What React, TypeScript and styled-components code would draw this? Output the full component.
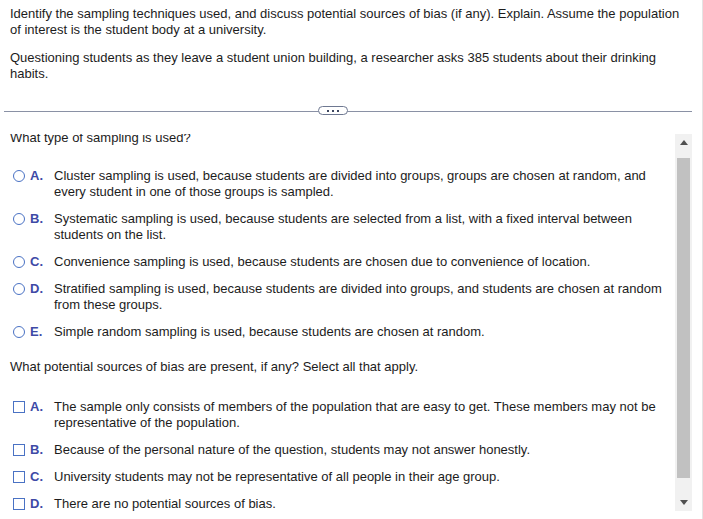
import { styled, createGlobalStyle } from 'styled-components'

const GlobalStyle = createGlobalStyle`
  html, body {
    margin: 0;
    padding: 0;
    background: #ffffff;
  }
  body {
    font-family: 'Liberation Sans', Arial, sans-serif;
    font-size: 13px;
    line-height: 16px;
    color: #1c1c1c;
  }
`

const radioOptions = [
  {
    letter: 'A.',
    text: 'Cluster sampling is used, because students are divided into groups, groups are chosen at random, and every student in one of those groups is sampled.',
  },
  {
    letter: 'B.',
    text: 'Systematic sampling is used, because students are selected from a list, with a fixed interval between students on the list.',
  },
  { letter: 'C.', text: 'Convenience sampling is used, because students are chosen due to convenience of location.' },
  {
    letter: 'D.',
    text: 'Stratified sampling is used, because students are divided into groups, and students are chosen at random from these groups.',
  },
  { letter: 'E.', text: 'Simple random sampling is used, because students are chosen at random.' },
]

const biasOptions = [
  {
    letter: 'A.',
    text: 'The sample only consists of members of the population that are easy to get. These members may not be representative of the population.',
  },
  { letter: 'B.', text: 'Because of the personal nature of the question, students may not answer honestly.' },
  { letter: 'C.', text: 'University students may not be representative of all people in their age group.' },
  { letter: 'D.', text: 'There are no potential sources of bias.' },
]

const App = () => {
  return (
    <Page>
      <GlobalStyle />
      <Header>
        <Para>
          Identify the sampling techniques used, and discuss potential sources of bias (if any). Explain. Assume the population
          of interest is the student body at a university.
        </Para>
        <Para>
          Questioning students as they leave a student union building, a researcher asks 385 students about their drinking
          habits.
        </Para>
      </Header>
      <Divider>
        <Pill>
          <Dot />
          <Dot />
          <Dot />
        </Pill>
      </Divider>
      <Main>
        <Scroller>
          <Content>
            <Question>What type of sampling is used?</Question>
            <OptionList>
              {radioOptions.map((o) => (
                <Option key={o.letter}>
                  <Radio />
                  <Letter>{o.letter}</Letter>
                  <OptionText>{o.text}</OptionText>
                </Option>
              ))}
            </OptionList>
            <Question $top={19}>What potential sources of bias are present, if any? Select all that apply.</Question>
            <OptionList $top={24}>
              {biasOptions.map((o) => (
                <Option key={o.letter}>
                  <Checkbox />
                  <Letter>{o.letter}</Letter>
                  <OptionText>{o.text}</OptionText>
                </Option>
              ))}
            </OptionList>
          </Content>
        </Scroller>
        <ScrollTrack>
          <ArrowButton>
            <svg width="8" height="5" viewBox="0 0 8 5">
              <path d="M0 5 L4 0 L8 5 Z" fill="#505050" />
            </svg>
          </ArrowButton>
          <ThumbArea>
            <Thumb />
          </ThumbArea>
          <ArrowButton>
            <svg width="8" height="5" viewBox="0 0 8 5">
              <path d="M0 0 L4 5 L8 0 Z" fill="#505050" />
            </svg>
          </ArrowButton>
        </ScrollTrack>
      </Main>
    </Page>
  )
}

export default App

const Page = styled.div`
  width: 703px;
  height: 519px;
  box-sizing: border-box;
  border-right: 1px solid #e4e4e4;
  overflow: hidden;
  display: flex;
  flex-direction: column;
`

const Header = styled.div`
  padding: 6px 10px 0;
`

const Para = styled.p`
  margin: 0 0 12px;
`

const Divider = styled.div`
  position: relative;
  margin: 17px 0 0 4px;
  width: 688px;
  height: 1px;
  background: #8a91a5;
`

const Pill = styled.div`
  position: absolute;
  left: 314px;
  top: -5px;
  width: 30px;
  height: 9px;
  box-sizing: border-box;
  border: 1px solid #6e7891;
  border-radius: 5px;
  background: #ffffff;
  display: flex;
  align-items: center;
  justify-content: center;
  gap: 3px;
`

const Dot = styled.span`
  width: 2px;
  height: 2px;
  background: #3d4660;
`

const Main = styled.div`
  margin-top: 22px;
  height: 377px;
  display: flex;
`

const Scroller = styled.div`
  width: 675px;
  overflow: hidden;
`

const Content = styled.div`
  margin-top: -4px;
  padding: 0 10px;
`

const Question = styled.div<{ $top?: number }>`
  margin-top: ${({ $top }) => $top ?? 0}px;
`

const OptionList = styled.div<{ $top?: number }>`
  margin-top: ${({ $top }) => $top ?? 22}px;
  display: flex;
  flex-direction: column;
  gap: 11px;
`

const Option = styled.div`
  display: flex;
  align-items: flex-start;
`

const Radio = styled.span`
  flex: none;
  width: 12px;
  height: 12px;
  margin: 2px 0 0 3px;
  box-sizing: border-box;
  border: 1.5px solid #4a72c4;
  border-radius: 50%;
`

const Checkbox = styled.span`
  flex: none;
  width: 12px;
  height: 12px;
  margin: 2px 0 0 3px;
  box-sizing: border-box;
  border: 1.5px solid #4a72c4;
`

const Letter = styled.span`
  flex: none;
  width: 24px;
  margin-left: 5px;
  font-weight: bold;
  color: #3e4aa6;
`

const OptionText = styled.span`
  flex: 1;
  padding-right: 2px;
`

const ScrollTrack = styled.div`
  width: 17px;
  background: #f1f1f1;
  display: flex;
  flex-direction: column;
`

const ArrowButton = styled.div`
  height: 17px;
  display: flex;
  align-items: center;
  justify-content: center;
`

const ThumbArea = styled.div`
  flex: 1;
  padding: 7px 2px 16px;
  display: flex;
`

const Thumb = styled.div`
  flex: 1;
  background: #c1c1c1;
`
